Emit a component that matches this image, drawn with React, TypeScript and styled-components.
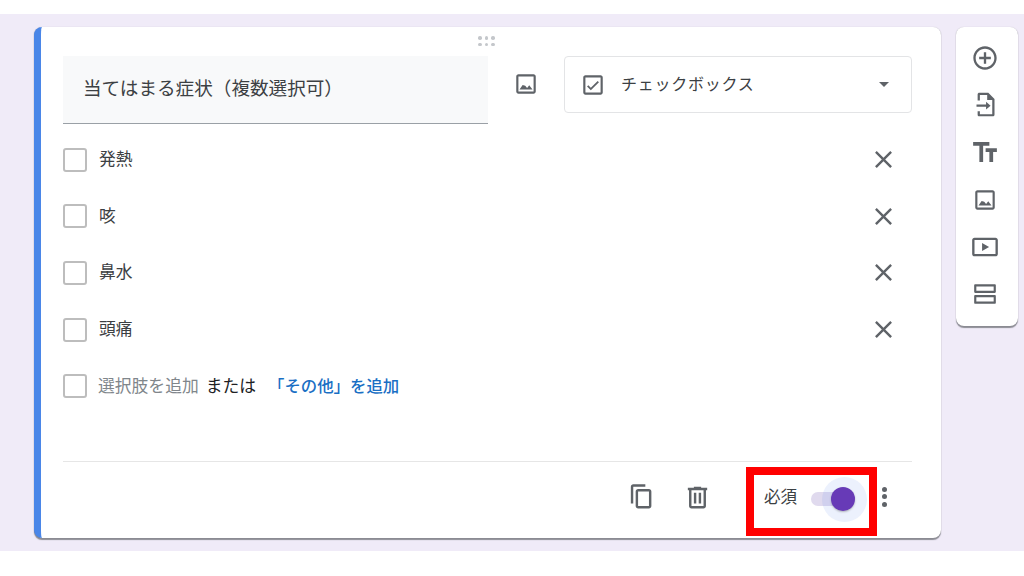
import React from "react";
import styled, { createGlobalStyle } from "styled-components";

const Global = createGlobalStyle`
  html, body { margin: 0; padding: 0; background: #fff; }
  body { font-family: "Noto Sans CJK JP", "Roboto", sans-serif; color: #202124; }
`;

const Page = styled.div`
  width: 1024px;
  height: 576px;
  overflow: hidden;
  padding-top: 14px;
  box-sizing: border-box;
`;

const Stage = styled.div`
  height: 537px;
  background: #f0ebf8;
  padding: 13px 6px 0 34px;
  box-sizing: border-box;
  display: flex;
  align-items: flex-start;
  gap: 15px;
`;

const Card = styled.section`
  position: relative;
  width: 907px;
  height: 511px;
  box-sizing: border-box;
  background: #fff;
  border-radius: 8px;
  border-left: 7px solid #4a86e8;
  padding: 29px 29px 0 22px;
  box-shadow: 0 1.5px 1px rgba(60, 64, 67, 0.55), 0 0 1px rgba(60, 64, 67, 0.25);
  display: flex;
  flex-direction: column;
`;

const DragHandle = styled.div`
  position: absolute;
  top: 9px;
  left: 437px;
  display: grid;
  grid-template-columns: repeat(3, 3.5px);
  gap: 3px;
`;

const Dot = styled.i`
  width: 3.5px;
  height: 3.5px;
  border-radius: 50%;
  background: #c4c7cb;
`;

const Header = styled.div`
  display: flex;
  align-items: flex-start;
  height: 68px;
`;

const TitleField = styled.div`
  width: 425px;
  height: 68px;
  box-sizing: border-box;
  background: #f8f9fa;
  border-bottom: 1px solid #9aa0a6;
  padding: 0 0 6px 20px;
  display: flex;
  align-items: center;
  font-size: 18.6px;
  color: #3c4043;
`;

const ImageSlot = styled.div`
  width: 76px;
  height: 56px;
  display: flex;
  align-items: center;
  justify-content: center;
  color: #5f6368;
`;

const TypeSelect = styled.div`
  width: 348px;
  height: 57px;
  box-sizing: border-box;
  border: 1px solid #e3e4e6;
  border-radius: 4px;
  display: flex;
  align-items: center;
  padding: 0 22px 0 15px;
  font-size: 16px;
  letter-spacing: 0.75px;
  color: #3c4043;
`;

const TypeIcon = styled.span`
  display: flex;
  color: #5f6368;
`;

const TypeLabel = styled.span`
  flex: 1;
  margin-left: 15px;
  padding-bottom: 3px;
`;

const Caret = styled.i`
  width: 0;
  height: 0;
  border-left: 5px solid transparent;
  border-right: 5px solid transparent;
  border-top: 5px solid #5f6368;
`;

const Options = styled.div`
  display: flex;
  flex-direction: column;
  margin-top: 7.5px;
`;

const OptionRow = styled.div`
  height: 56.6px;
  display: flex;
  align-items: center;
  font-size: 16.8px;
  color: #3c4043;
`;

const Box = styled.span`
  width: 24px;
  height: 24px;
  box-sizing: border-box;
  border: 2px solid #bdbdbd;
  border-radius: 3px;
  margin-right: 11px;
  flex: none;
`;

const OptionText = styled.span`
  flex: 1;
  padding: 0 0 3px 1px;
`;

const CloseIcon = styled.span`
  width: 29px;
  height: 29px;
  margin-right: 14px;
  color: #5f6368;
  display: flex;
`;

const Muted = styled.span`
  color: #80868b;
  margin-right: 7px;
  padding-bottom: 3px;
`;

const Plain = styled.span`
  color: #202124;
  margin-right: 12px;
  padding-bottom: 3px;
`;

const LinkText = styled.span`
  color: #1a6fc4;
  font-weight: 500;
  font-size: 16.4px;
  padding-bottom: 3px;
`;

const Footer = styled.div`
  margin-top: 46.5px;
  border-top: 1px solid #e6e6e6;
  height: 77px;
  display: flex;
  align-items: flex-start;
  justify-content: flex-end;
`;

const FootIcon = styled.span`
  width: 29px;
  height: 29px;
  color: #5f6368;
  display: flex;
  margin: 21px 28px 0 0;
`;

const RequiredBox = styled.div`
  width: 131px;
  height: 69px;
  box-sizing: border-box;
  margin: 5px 0 0 6px;
  border: 8px solid #ff0000;
  display: flex;
  align-items: center;
  padding: 0 0 4px 10px;
  font-size: 16.5px;
  color: #3c4043;
`;

const RequiredLabel = styled.span`
  margin-bottom: 6px;
`;

const Toggle = styled.div`
  position: relative;
  margin-left: 14px;
  width: 34px;
  height: 14px;
  border-radius: 7px;
  background: #e0daee;
`;

const Halo = styled.i`
  position: absolute;
  left: 11px;
  top: -15px;
  width: 45px;
  height: 45px;
  border-radius: 50%;
  background: rgba(100, 140, 235, 0.12);
`;

const Knob = styled.i`
  position: absolute;
  left: 20px;
  top: -5px;
  width: 24px;
  height: 24px;
  border-radius: 50%;
  background: #673ab7;
  box-shadow: 0 1px 2px rgba(0, 0, 0, 0.25);
`;

const MoreDots = styled.div`
  margin: 25px 22px 0 1px;
  width: 12px;
  display: flex;
  flex-direction: column;
  align-items: center;
  gap: 2.5px;
`;

const MoreDot = styled.i`
  width: 5px;
  height: 5px;
  border-radius: 50%;
  background: #5f6368;
`;

const SidePanel = styled.aside`
  width: 62px;
  height: 299px;
  background: #fff;
  border-radius: 8px;
  box-shadow: 0 1.5px 1px rgba(60, 64, 67, 0.55), 0 0 1px rgba(60, 64, 67, 0.25);
  display: flex;
  flex-direction: column;
  align-items: center;
  padding: 7px 4px 0 0;
  box-sizing: border-box;
`;

const SideButton = styled.span`
  width: 48px;
  height: 47.3px;
  display: flex;
  align-items: center;
  justify-content: center;
  color: #5f6368;
`;

const Icon = ({ d, size = 24 }: { d: string; size?: number }) => (
  <svg width={size} height={size} viewBox="0 0 24 24" fill="currentColor" aria-hidden="true">
    <path d={d} fillRule="evenodd" />
  </svg>
);

const P = {
  add: "M13 7h-2v4H7v2h4v4h2v-4h4v-2h-4V7zm-1-5C6.48 2 2 6.48 2 12s4.48 10 10 10 10-4.48 10-10S17.52 2 12 2zm0 18c-4.41 0-8-3.59-8-8s3.59-8 8-8 8 3.59 8 8-3.59 8-8 8z",
  importDoc:
    "M6.5 1.5H14.5l5.5 5.5v14c0 .9-.8 1.500-1.500 1.500H6.5C5.600 22.500 5 21.800 5 21v-3h2v2.600h11V8h-4.500V3.500H7v5H5V3c0-.9.7-1.500 1.500-1.500zM12.500 9.500l4 3.500-4 3.500V14H4v-2h8.500V9.500z",
  title: "M2.5 4v3h5v13h3V7h5V4h-13zm19 5h-9v3h3v8h3v-8h3V9z",
  image:
    "M19 5v14H5V5h14m0-2H5c-1.100 0-2 .9-2 2v14c0 1.100.9 2 2 2h14c1.100 0 2-.9 2-2V5c0-1.100-.9-2-2-2zm-4 10.200l-2 2.600-1.700-2.100L8.900 13 6 17h12l-3-3.800z",
  video:
    "M21 4H3c-1.100 0-2 .9-2 2v12c0 1.100.9 2 2 2h18c1.100 0 2-.9 2-2V6c0-1.100-.9-2-2-2zm0 14H3V6h18v12zM9.500 8.500v7l6-3.500-6-3.500z",
  section:
    "M3 3h18c.6 0 1 .4 1 1v6c0 .6-.4 1-1 1H3c-.6 0-1-.4-1-1V4c0-.6.4-1 1-1zm1 2v4h16V5H4zm-1 8h18c.6 0 1 .4 1 1v6c0 .6-.4 1-1 1H3c-.6 0-1-.4-1-1v-6c0-.6.4-1 1-1zm1 2v4h16v-4H4z",
  check:
    "M19 3H5c-1.100 0-2 .9-2 2v14c0 1.100.9 2 2 2h14c1.100 0 2-.9 2-2V5c0-1.100-.9-2-2-2zm0 16H5V5h14v14zM17.500 9.400l-1.200-1.200-6.300 6.300-2.300-2.300-1.200 1.200 3.500 3.500z",
  close:
    "M19 6.410L17.590 5 12 10.590 6.410 5 5 6.410 10.590 12 5 17.590 6.410 19 12 13.410 17.590 19 19 17.590 13.410 12z",
  copy: "M16 1H6c-1.100 0-2 .9-2 2v14h2V3h10V1zM19 5H10c-1.100 0-2 .9-2 2v12c0 1.100.9 2 2 2h9c1.100 0 2-.9 2-2V7c0-1.100-.9-2-2-2zm0 14h-9V7h9v12z",
  trash:
    "M15 4V3H9v1H4v2h1v13c0 1.100.9 2 2 2h10c1.100 0 2-.9 2-2V6h1V4h-5zm2 15H7V6h10v13zM9 8h2v9H9V8zm4 0h2v9h-2V8z",
};

const options = ["発熱", "咳", "鼻水", "頭痛"];
const sideIcons = [
  { key: "add", d: P.add, size: 28 },
  { key: "import", d: P.importDoc, size: 27 },
  { key: "title", d: P.title, size: 30 },
  { key: "image", d: P.image, size: 26 },
  { key: "video", d: P.video, size: 28 },
  { key: "section", d: P.section, size: 26 },
];

export default function App() {
  return (
    <Page>
      <Global />
      <Stage>
        <Card>
          <DragHandle>
            {Array.from({ length: 6 }).map((_, i) => (
              <Dot key={i} />
            ))}
          </DragHandle>
          <Header>
            <TitleField>当てはまる症状（複数選択可）</TitleField>
            <ImageSlot>
              <Icon d={P.image} size={26} />
            </ImageSlot>
            <TypeSelect>
              <TypeIcon>
                <Icon d={P.check} size={26} />
              </TypeIcon>
              <TypeLabel>チェックボックス</TypeLabel>
              <Caret />
            </TypeSelect>
          </Header>
          <Options>
            {options.map((o) => (
              <OptionRow key={o}>
                <Box />
                <OptionText>{o}</OptionText>
                <CloseIcon>
                  <Icon d={P.close} size={29} />
                </CloseIcon>
              </OptionRow>
            ))}
            <OptionRow>
              <Box />
              <Muted>選択肢を追加</Muted>
              <Plain>または</Plain>
              <LinkText>「その他」を追加</LinkText>
            </OptionRow>
          </Options>
          <Footer>
            <FootIcon>
              <Icon d={P.copy} size={29} />
            </FootIcon>
            <FootIcon>
              <Icon d={P.trash} size={29} />
            </FootIcon>
            <RequiredBox>
              <RequiredLabel>必須</RequiredLabel>
              <Toggle>
                <Halo />
                <Knob />
              </Toggle>
            </RequiredBox>
            <MoreDots>
              <MoreDot />
              <MoreDot />
              <MoreDot />
            </MoreDots>
          </Footer>
        </Card>
        <SidePanel>
          {sideIcons.map((s) => (
            <SideButton key={s.key}>
              <Icon d={s.d} size={s.size} />
            </SideButton>
          ))}
        </SidePanel>
      </Stage>
    </Page>
  );
}
